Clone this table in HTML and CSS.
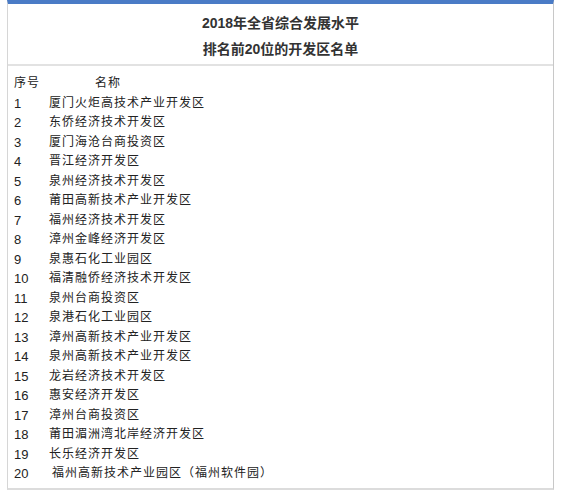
FILE: index.html
```html
<!DOCTYPE html>
<html lang="zh-CN">
<head>
  <meta charset="UTF-8" />
  <meta name="viewport" content="width=device-width, initial-scale=1" />
  <title>2018年全省综合发展水平排名前20位的开发区名单</title>
  <link rel="stylesheet" href="styles.css">
</head>
<body>

  <div class="panel">
    <div class="panel-head">
      <p>2018年全省综合发展水平</p>
      <p>排名前20位的开发区名单</p>
    </div>

    <div class="panel-body">
      <div class="row head"><span class="num">序号</span><span class="name">名称</span></div>
      <div class="row"><span class="num">1</span><span class="name">厦门火炬高技术产业开发区</span></div>
      <div class="row"><span class="num">2</span><span class="name">东侨经济技术开发区</span></div>
      <div class="row"><span class="num">3</span><span class="name">厦门海沧台商投资区</span></div>
      <div class="row"><span class="num">4</span><span class="name">晋江经济开发区</span></div>
      <div class="row"><span class="num">5</span><span class="name">泉州经济技术开发区</span></div>
      <div class="row"><span class="num">6</span><span class="name">莆田高新技术产业开发区</span></div>
      <div class="row"><span class="num">7</span><span class="name">福州经济技术开发区</span></div>
      <div class="row"><span class="num">8</span><span class="name">漳州金峰经济开发区</span></div>
      <div class="row"><span class="num">9</span><span class="name">泉惠石化工业园区</span></div>
      <div class="row"><span class="num">10</span><span class="name">福清融侨经济技术开发区</span></div>
      <div class="row"><span class="num">11</span><span class="name">泉州台商投资区</span></div>
      <div class="row"><span class="num">12</span><span class="name">泉港石化工业园区</span></div>
      <div class="row"><span class="num">13</span><span class="name">漳州高新技术产业开发区</span></div>
      <div class="row"><span class="num">14</span><span class="name">泉州高新技术产业开发区</span></div>
      <div class="row"><span class="num">15</span><span class="name">龙岩经济技术开发区</span></div>
      <div class="row"><span class="num">16</span><span class="name">惠安经济开发区</span></div>
      <div class="row"><span class="num">17</span><span class="name">漳州台商投资区</span></div>
      <div class="row"><span class="num">18</span><span class="name">莆田湄洲湾北岸经济开发区</span></div>
      <div class="row"><span class="num">19</span><span class="name">长乐经济开发区</span></div>
      <div class="row last"><span class="num">20</span><span class="name">福州高新技术产业园区（福州软件园）</span></div>
    </div>
  </div>

</body>
</html>
```

FILE: styles.css
```css
body {
  margin: 0;
  background-color: #fff;
  color: #222;
  font-family: "Liberation Sans", "Noto Sans CJK SC", sans-serif;
}
.panel {
  width: 545px;
  margin-left: 7px;
  border-top: 4px solid #4a7bc6;
  border-left: 1px solid #d6d6d6;
  border-right: 1px solid #c8c8c8;
  border-bottom: 2px solid #dcdcdc;
}
.panel-head {
  padding: 6px 0 2px;
  text-align: center;
  border-bottom: 2px solid #e2e2e2;
}
.panel-head p {
  margin: 0;
  font-size: 14px;
  font-weight: bold;
  line-height: 26px;
  color: #333;
}
.panel-body {
  padding: 8px 0 4px 6px;
}
.row {
  display: flex;
  font-size: 12px;
  line-height: 19.5px;
}
.row .num {
  width: 35px;
  font-size: 13px;
}
.row .name {
  letter-spacing: 1px;
}
.row.head .num {
  width: 81px;
  letter-spacing: 1px;
  font-size: 12px;
}
.row.last .name {
  padding-left: 3px;
}
```
